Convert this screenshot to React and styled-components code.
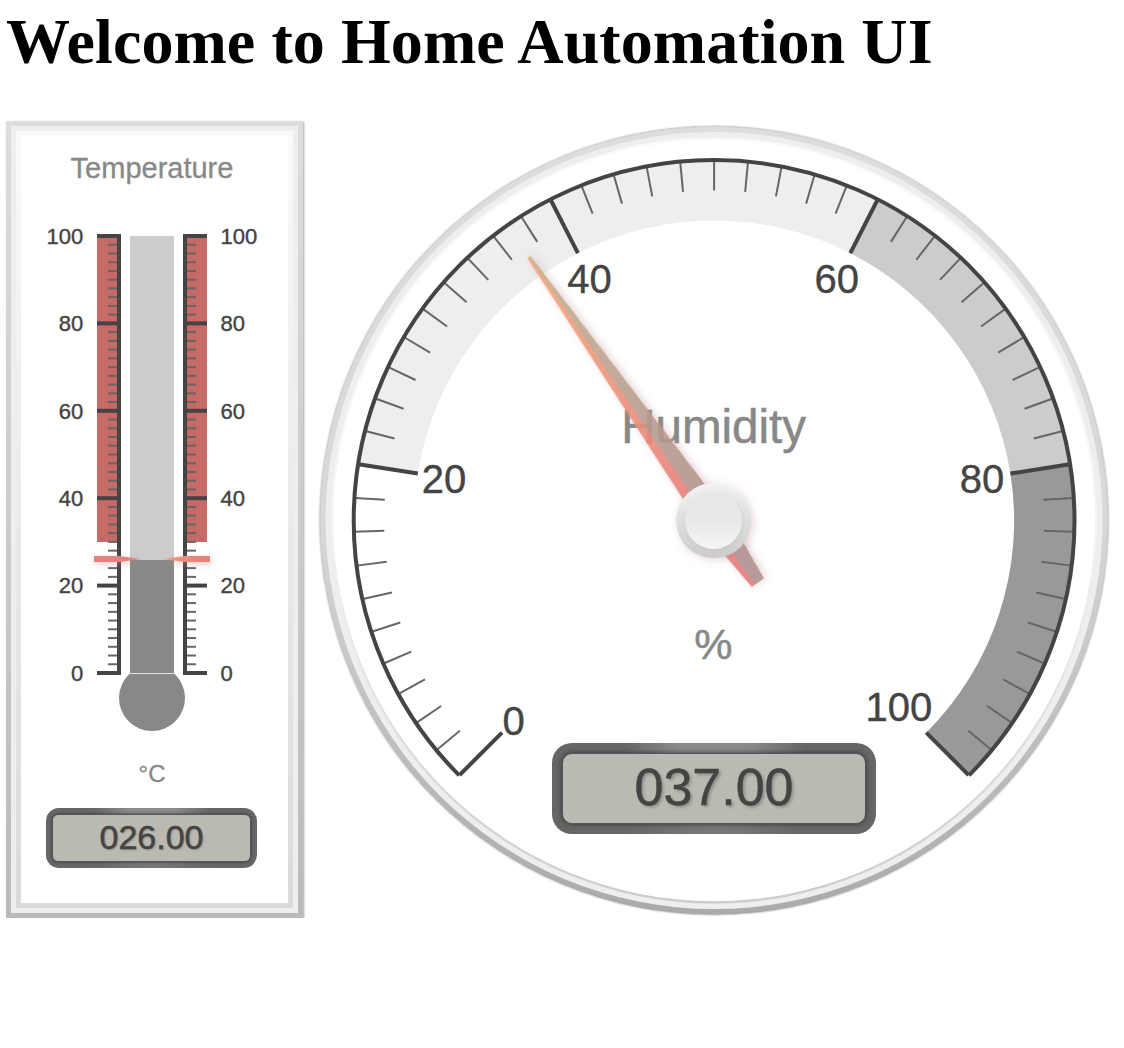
import React from "react";
import styled, { createGlobalStyle } from "styled-components";

const GlobalStyle = createGlobalStyle`
  body {
    margin: 0;
    background: #fff;
    overflow: hidden;
  }
`;

const Page = styled.main`
  padding: 5px 0 0 6px;
  font-family: "Liberation Sans", Arial, sans-serif;
`;

const Title = styled.h1`
  margin: 0 0 42px;
  font: bold 64px/74px "Liberation Serif", "Times New Roman", serif;
  letter-spacing: 0.08px;
  color: #000;
  white-space: nowrap;
`;

const Gauges = styled.section`
  display: flex;
  align-items: flex-start;
  gap: 16px;
`;

const PlateOuter = styled.article`
  box-sizing: border-box;
  width: 297px;
  height: 797px;
  padding: 5px;
  background: linear-gradient(#ddd, #bababa);
  box-shadow: 1px 1px 2px rgba(0, 0, 0, 0.35);
`;

const PlateMiddle = styled.div`
  box-sizing: border-box;
  height: 100%;
  padding: 5px;
  background: #eee;
`;

const PlateInner = styled.div`
  box-sizing: border-box;
  height: 100%;
  padding: 5px;
  background: linear-gradient(#fafafa, #dadada);
`;

const Plate = styled.div`
  box-sizing: border-box;
  height: 100%;
  padding-top: 15px;
  display: flex;
  flex-direction: column;
  align-items: center;
  background: #fff;
`;

const Caption = styled.div`
  margin-right: 5px;
  color: #888;
  font-size: ${(p) => p.$size}px;
  line-height: 34px;
  -webkit-text-stroke: 0.3px #888;
`;

const Thermometer = styled.svg`
  display: block;
  width: 267px;
  height: 550px;
  margin: 22px 0 0;
`;

const Readout = styled.div`
  box-sizing: border-box;
  display: flex;
  width: ${(p) => (p.$large ? 324 : 211)}px;
  height: ${(p) => (p.$large ? 91 : 60)}px;
  padding: ${(p) => (p.$large ? 10 : 6)}px;
  border-radius: ${(p) => (p.$large ? 20 : 13)}px;
  background:
    radial-gradient(ellipse 28% 60% at 50% 0, #8a8a8a 40%, rgba(138, 138, 138, 0) 100%),
    radial-gradient(ellipse 28% 45% at 50% 100%, #777 20%, rgba(119, 119, 119, 0) 100%),
    #666;
`;

const PlateReadout = styled(Readout)`
  margin: 17px 6px 0 0;
`;

const DialReadout = styled(Readout)`
  position: absolute;
  left: 233px;
  top: 618px;
`;

const Screen = styled.div`
  box-sizing: border-box;
  flex: 1;
  display: flex;
  align-items: center;
  justify-content: center;
  padding-bottom: ${(p) => (p.$large ? 4 : 2)}px;
  border: 1px solid #555;
  border-radius: ${(p) => (p.$large ? 10 : 6)}px;
  background: #babab2;
  box-shadow: 0 0 ${(p) => (p.$large ? 5 : 3)}px #333;
  color: #444;
  font-size: ${(p) => (p.$large ? 52 : 34)}px;
  line-height: 1;
  -webkit-text-stroke: 0.5px #444;
  text-shadow: ${(p) => (p.$large ? "2px 2px 3px" : "1px 1px 2px")} rgba(0, 0, 0, 0.25);
`;

const Dial = styled.article`
  position: relative;
  width: 790px;
  height: 790px;
  margin-top: 4px;
`;

const DialDrawing = styled.svg`
  display: block;
  width: 790px;
  height: 790px;
  overflow: visible;
`;

const MinorTick = styled.line`
  stroke: #666;
  stroke-width: 2;
`;

const MajorTick = styled.line`
  stroke: #444;
  stroke-width: 4;
`;

const ScaleNumber = styled.text`
  fill: #444;
  stroke: #444;
  stroke-width: 0.4px;
  font-family: "Liberation Sans", Arial, sans-serif;
  font-size: ${(p) => p.$size}px;
`;

const DialCaption = styled.text`
  fill: #888;
  stroke: #888;
  stroke-width: 0.5px;
  font-family: "Liberation Sans", Arial, sans-serif;
  font-size: ${(p) => p.$size}px;
  text-anchor: middle;
`;

const MAJORS = [0, 20, 40, 60, 80, 100];
const MINORS = Array.from({ length: 51 }, (_, i) => i * 2).filter((v) => v % 20);

const levelY = (value) => 673 - value * 4.37;

function LinearScale({ side }) {
  const left = side === "left";
  const axis = left ? 119 : 185;
  const dir = left ? -1 : 1;
  return (
    <g>
      <rect x={left ? 97 : 185} y="236" width="22" height="306" fill="#c76966" />
      {MINORS.map((v) => (
        <MinorTick key={v} x1={axis} x2={axis + dir * 11} y1={levelY(v)} y2={levelY(v)} />
      ))}
      <line x1={axis} x2={axis} y1="234" y2="675" stroke="#444" strokeWidth="4" />
      {MAJORS.map((v) => (
        <React.Fragment key={v}>
          <MajorTick x1={axis} x2={axis + dir * 22} y1={levelY(v)} y2={levelY(v)} />
          <ScaleNumber
            $size={22}
            x={left ? 83.3 : 220.5}
            y={levelY(v) + 7.7}
            textAnchor={left ? "end" : "start"}
          >
            {v}
          </ScaleNumber>
        </React.Fragment>
      ))}
    </g>
  );
}

function TemperatureGauge() {
  return (
    <PlateOuter>
      <PlateMiddle>
        <PlateInner>
          <Plate>
            <Caption $size={29}>Temperature</Caption>
            <Thermometer viewBox="21 207 267 550">
              <defs>
                <linearGradient id="pointer" gradientUnits="userSpaceOnUse" x1="163" x2="200" y1="0" y2="0">
                  <stop offset="0" stopColor="#eea07c" />
                  <stop offset="1" stopColor="#e6827e" />
                </linearGradient>
                <filter id="pointerShadow" x="-20%" y="-200%" width="140%" height="500%">
                  <feDropShadow dx="1" dy="2" stdDeviation="3" floodColor="#bc8f8f" floodOpacity="0.5" />
                </filter>
              </defs>
              <LinearScale side="left" />
              <LinearScale side="right" />
              <rect x="130" y="236" width="44" height="324" fill="#ccc" />
              <rect x="130" y="560" width="44" height="113" fill="#888" />
              <path d="M129.6 673.8 A33 33 0 1 0 174.4 673.8 Z" fill="#888" />
              <g filter="url(#pointerShadow)">
                <path d="M94 556H119L141 559L119 562H94Z" fill="#e3827e" />
                <path d="M210 556H185L163 559L185 562H210Z" fill="url(#pointer)" />
              </g>
            </Thermometer>
            <Caption $size={24}>°C</Caption>
            <PlateReadout>
              <Screen>026.00</Screen>
            </PlateReadout>
          </Plate>
        </PlateInner>
      </PlateMiddle>
    </PlateOuter>
  );
}

const CX = 714;
const CY = 520;

function polar(value, radius) {
  const a = ((45 + value * 2.7) * Math.PI) / 180;
  return [CX - Math.sin(a) * radius, CY + Math.cos(a) * radius];
}

function bandPath(from, to) {
  const [a, b, c, d] = [polar(from, 360), polar(to, 360), polar(to, 300), polar(from, 300)];
  return `M${a}A360 360 0 0 1 ${b}L${c}A300 300 0 0 0 ${d}Z`;
}

function RadialTick({ value, major }) {
  const [x1, y1] = polar(value, 360);
  const [x2, y2] = polar(value, major ? 300 : 330);
  const Tick = major ? MajorTick : MinorTick;
  return <Tick x1={x1} y1={y1} x2={x2} y2={y2} />;
}

const DIAL_NUMBERS = [
  [0, 513.5, 734],
  [20, 444, 492],
  [40, 589.5, 292],
  [60, 836.7, 292],
  [80, 982, 492],
  [100, 898.7, 720],
];

function HumidityGauge() {
  const arcStart = polar(0, 360.4);
  const arcEnd = polar(100, 360.4);
  return (
    <Dial>
      <DialDrawing viewBox="318.9 124.5 790 790">
        <defs>
          <linearGradient id="rimOuter" x1="0" y1="0" x2="0" y2="1">
            <stop offset="0" stopColor="#ddd" />
            <stop offset="0.5" stopColor="#d8d8d8" />
            <stop offset="1" stopColor="#aaa" />
          </linearGradient>
          <linearGradient id="rimInner" x1="0" y1="0" x2="0" y2="1">
            <stop offset="0" stopColor="#fafafa" />
            <stop offset="0.5" stopColor="#f5f5f5" />
            <stop offset="1" stopColor="#ccc" />
          </linearGradient>
          <linearGradient id="needle" gradientUnits="userSpaceOnUse" x1="0" y1="-322" x2="0" y2="0">
            <stop offset="0" stopColor="#f7a67a" />
            <stop offset="1" stopColor="#e57c7c" />
          </linearGradient>
          <linearGradient id="needleShade" gradientUnits="userSpaceOnUse" x1="0" y1="-322" x2="0" y2="0">
            <stop offset="0" stopColor="#c5b08c" />
            <stop offset="1" stopColor="#b09090" />
          </linearGradient>
          <linearGradient id="hubOuter" x1="0" y1="0" x2="0" y2="1">
            <stop offset="0" stopColor="#f3f3f3" />
            <stop offset="1" stopColor="#ccc" />
          </linearGradient>
          <linearGradient id="hubInner" x1="0" y1="0" x2="0" y2="1">
            <stop offset="0" stopColor="#e8e8e8" />
            <stop offset="0.5" stopColor="#e8e8e8" />
            <stop offset="1" stopColor="#f5f5f5" />
          </linearGradient>
          <filter id="rimShadow" x="-5%" y="-5%" width="110%" height="110%">
            <feDropShadow dx="0" dy="0" stdDeviation="1" floodColor="#000" floodOpacity="0.5" />
          </filter>
          <filter id="needleShadow" filterUnits="userSpaceOnUse" x="-50" y="-350" width="100" height="460">
            <feDropShadow dx="2" dy="0" stdDeviation="4" floodColor="#bc8f8f" floodOpacity="0.45" />
          </filter>
          <filter id="hubShadow" x="-30%" y="-30%" width="160%" height="160%">
            <feDropShadow dx="2" dy="2" stdDeviation="4" floodColor="#bc8f8f" floodOpacity="0.35" />
          </filter>
          <filter id="capShadow" x="-30%" y="-30%" width="160%" height="160%">
            <feDropShadow dx="1" dy="1" stdDeviation="2.5" floodColor="#bc8f8f" floodOpacity="0.25" />
          </filter>
        </defs>

        <circle cx={CX} cy={CY} r="394" fill="url(#rimOuter)" filter="url(#rimShadow)" />
        <circle cx={CX} cy={CY} r="394" fill="none" stroke="#000" strokeOpacity="0.06" />
        <circle cx={CX} cy={CY} r="388.5" fill="#eee" />
        <circle cx={CX} cy={CY} r="383" fill="url(#rimInner)" />
        <circle cx={CX} cy={CY} r="380.7" fill="#fff" />

        <path d={bandPath(20, 60)} fill="#eee" />
        <path d={bandPath(60, 80)} fill="#ccc" />
        <path d={bandPath(80, 100)} fill="#999" />
        {MINORS.map((v) => (
          <RadialTick key={v} value={v} />
        ))}
        <path d={`M${arcStart}A360.4 360.4 0 1 1 ${arcEnd}`} fill="none" stroke="#444" strokeWidth="4" />
        {MAJORS.map((v) => (
          <RadialTick key={v} value={v} major />
        ))}
        {DIAL_NUMBERS.map(([v, x, y]) => (
          <ScaleNumber key={v} $size={40} x={x} y={y} textAnchor="middle">
            {v}
          </ScaleNumber>
        ))}

        <DialCaption $size={47.5} x="713.5" y="442">Humidity</DialCaption>
        <DialCaption $size={43} x="713.3" y="658.5">%</DialCaption>

        <g transform={`translate(${CX} ${CY}) rotate(-35.1)`}>
          <g filter="url(#needleShadow)" opacity="0.9">
            <path d="M-2 -322H1.8L14.5 0L7.3 76H-7.3L-14.5 0Z" fill="url(#needle)" />
            <path d="M0.2 -322H1.8L14.5 0L7.3 76H-3.5V-38Z" fill="url(#needleShade)" />
          </g>
        </g>
        <circle cx={CX - 0.3} cy={CY} r="37.7" fill="url(#hubOuter)" filter="url(#hubShadow)" />
        <circle cx={CX - 0.5} cy={CY} r="28.5" fill="url(#hubInner)" filter="url(#capShadow)" />
      </DialDrawing>
      <DialReadout $large>
        <Screen $large>037.00</Screen>
      </DialReadout>
    </Dial>
  );
}

export default function App() {
  return (
    <>
      <GlobalStyle />
      <Page>
        <Title>Welcome to Home Automation UI</Title>
        <Gauges>
          <TemperatureGauge />
          <HumidityGauge />
        </Gauges>
      </Page>
    </>
  );
}
